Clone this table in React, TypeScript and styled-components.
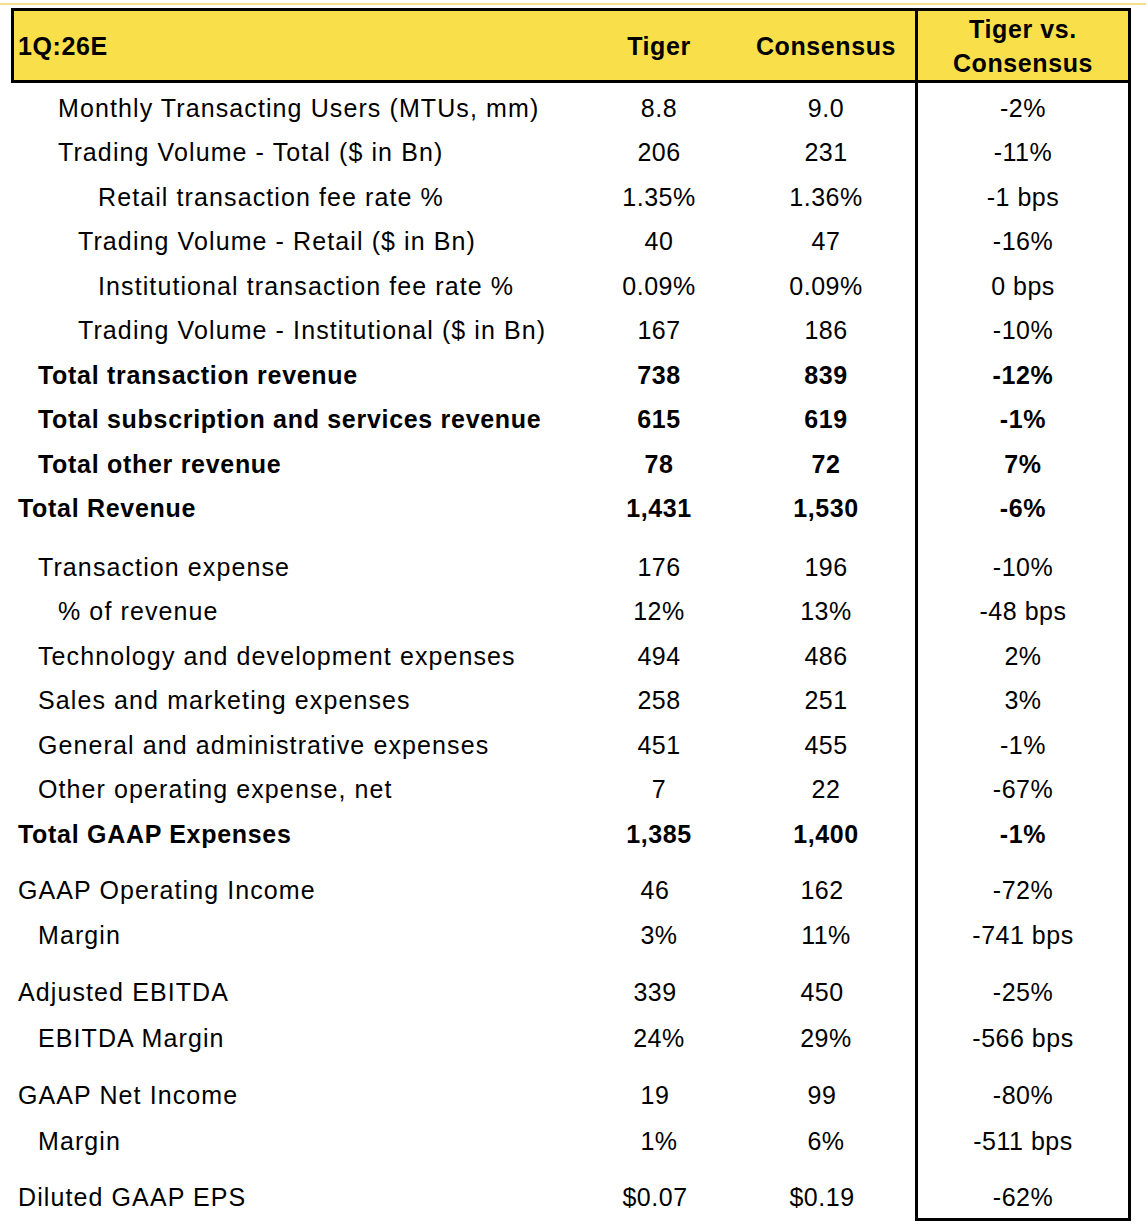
import React from "react";
import styled, { createGlobalStyle } from "styled-components";

const Global = createGlobalStyle`
  html, body { margin: 0; padding: 0; background: #ffffff; }
  body { font-family: "Liberation Sans", Arial, sans-serif; color: #000; }
`;

const Page = styled.div`
  width: 1146px;
  min-height: 1232px;
  background: #fff;
`;

const TopRule = styled.div`
  margin-top: 3px;
  height: 2px;
  background: #f4dd8c;
`;

const Table = styled.div`
  margin: 3px 0 0 11px;
  width: 1120px;
  display: flex;
  flex-direction: column;
`;

const Header = styled.div`
  display: grid;
  grid-template-columns: 561px 168px 172px 213px;
  height: 69px;
  border: 3px solid #000;
  background: #f9e04b;
  font-weight: 700;
  font-size: 25px;
  letter-spacing: 0.6px;
`;

const HeadCell = styled.div<{ $align?: "left" | "center"; $divider?: boolean; $shift?: number }>`
  display: flex;
  align-items: center;
  justify-content: ${(p) => (p.$align === "left" ? "flex-start" : "center")};
  text-align: center;
  padding-left: ${(p) => (p.$align === "left" ? "4px" : "0")};
  padding-right: ${(p) => p.$shift ?? 0}px;
  padding-top: 1px;
  line-height: 34px;
  border-left: ${(p) => (p.$divider ? "3px solid #000" : "none")};
`;

const Row = styled.div<{ $h: number }>`
  display: grid;
  grid-template-columns: 564px 168px 172px 216px;
  height: ${(p) => p.$h}px;
  font-size: 25px;
`;

const Label = styled.div<{ $level: number; $bold?: boolean }>`
  display: flex;
  align-items: center;
  padding-left: ${(p) => 7 + p.$level * 20}px;
  font-weight: ${(p) => (p.$bold ? 700 : 400)};
  letter-spacing: ${(p) => (p.$bold ? "0.7px" : "1.1px")};
  white-space: nowrap;
`;

const Value = styled.div<{ $bold?: boolean; $pad?: number }>`
  display: flex;
  align-items: center;
  justify-content: center;
  padding-right: ${(p) => p.$pad ?? 0}px;
  font-weight: ${(p) => (p.$bold ? 700 : 400)};
  letter-spacing: ${(p) => (p.$bold ? "0.6px" : "0.5px")};
`;

const DiffCell = styled.div<{ $bold?: boolean; $last?: boolean }>`
  display: flex;
  align-items: center;
  justify-content: center;
  border-left: 3px solid #000;
  border-right: 3px solid #000;
  border-bottom: ${(p) => (p.$last ? "3px solid #000" : "none")};
  font-weight: ${(p) => (p.$bold ? 700 : 400)};
  letter-spacing: ${(p) => (p.$bold ? "0.6px" : "0.5px")};
  padding-top: ${(p) => (p.$last ? "3px" : "0")};
`;

type Line = {
  label: string;
  level: number;
  t: string;
  c: string;
  d: string;
  bold?: boolean;
  acct?: boolean;
};

type Item = { kind: "row"; h: number; line: Line } | { kind: "space"; h: number };

const r = (h: number, line: Line): Item => ({ kind: "row", h, line });
const sp = (h: number): Item => ({ kind: "space", h });

const items: Item[] = [
  sp(3),
  r(44.5, { label: "Monthly Transacting Users (MTUs, mm)", level: 2, t: "8.8", c: "9.0", d: "-2%" }),
  r(44.5, { label: "Trading Volume - Total ($ in Bn)", level: 2, t: "206", c: "231", d: "-11%" }),
  r(44.5, { label: "Retail transaction fee rate %", level: 4, t: "1.35%", c: "1.36%", d: "-1 bps" }),
  r(44.5, { label: "Trading Volume - Retail ($ in Bn)", level: 3, t: "40", c: "47", d: "-16%" }),
  r(44.5, { label: "Institutional transaction fee rate %", level: 4, t: "0.09%", c: "0.09%", d: "0 bps" }),
  r(44.5, { label: "Trading Volume - Institutional ($ in Bn)", level: 3, t: "167", c: "186", d: "-10%" }),
  r(44.5, { label: "Total transaction revenue", level: 1, t: "738", c: "839", d: "-12%", bold: true }),
  r(44.5, { label: "Total subscription and services revenue", level: 1, t: "615", c: "619", d: "-1%", bold: true }),
  r(44.5, { label: "Total other revenue", level: 1, t: "78", c: "72", d: "7%", bold: true }),
  r(44.5, { label: "Total Revenue", level: 0, t: "1,431", c: "1,530", d: "-6%", bold: true }),
  sp(14),
  r(44.5, { label: "Transaction expense", level: 1, t: "176", c: "196", d: "-10%" }),
  r(44.5, { label: "% of revenue", level: 2, t: "12%", c: "13%", d: "-48 bps" }),
  r(44.5, { label: "Technology and development expenses", level: 1, t: "494", c: "486", d: "2%" }),
  r(44.5, { label: "Sales and marketing expenses", level: 1, t: "258", c: "251", d: "3%" }),
  r(44.5, { label: "General and administrative expenses", level: 1, t: "451", c: "455", d: "-1%" }),
  r(44.5, { label: "Other operating expense, net", level: 1, t: "7", c: "22", d: "-67%" }),
  r(44.5, { label: "Total GAAP Expenses", level: 0, t: "1,385", c: "1,400", d: "-1%", bold: true }),
  sp(10.75),
  r(45.5, { label: "GAAP Operating Income", level: 0, t: "46", c: "162", d: "-72%", acct: true }),
  r(45.5, { label: "Margin", level: 1, t: "3%", c: "11%", d: "-741 bps" }),
  sp(11.5),
  r(45.5, { label: "Adjusted EBITDA", level: 0, t: "339", c: "450", d: "-25%", acct: true }),
  r(45.5, { label: "EBITDA Margin", level: 1, t: "24%", c: "29%", d: "-566 bps" }),
  sp(12),
  r(45.5, { label: "GAAP Net Income", level: 0, t: "19", c: "99", d: "-80%", acct: true }),
  r(45.5, { label: "Margin", level: 1, t: "1%", c: "6%", d: "-511 bps" }),
  sp(9),
  r(45.5, { label: "Diluted GAAP EPS", level: 0, t: "$0.07", c: "$0.19", d: "-62%", acct: true }),
];

export default function App() {
  return (
    <Page>
      <Global />
      <TopRule />
      <Table>
        <Header>
          <HeadCell $align="left">1Q:26E</HeadCell>
          <HeadCell>Tiger</HeadCell>
          <HeadCell $shift={6}>Consensus</HeadCell>
          <HeadCell $divider>
            Tiger vs.
            <br />
            Consensus
          </HeadCell>
        </Header>
        {items.map((it, i) => {
          const last = i === items.length - 1;
          if (it.kind === "space") {
            return (
              <Row key={i} $h={it.h}>
                <Label $level={0} />
                <Value />
                <Value />
                <DiffCell />
              </Row>
            );
          }
          const l = it.line;
          return (
            <Row key={i} $h={last ? it.h + 3 : it.h}>
              <Label $level={l.level} $bold={l.bold}>
                {l.label}
              </Label>
              <Value $bold={l.bold} $pad={l.acct ? 8 : 0}>
                {l.t}
              </Value>
              <Value $bold={l.bold} $pad={l.acct ? 14 : 6}>
                {l.c}
              </Value>
              <DiffCell $bold={l.bold} $last={last}>
                {l.d}
              </DiffCell>
            </Row>
          );
        })}
      </Table>
    </Page>
  );
}
